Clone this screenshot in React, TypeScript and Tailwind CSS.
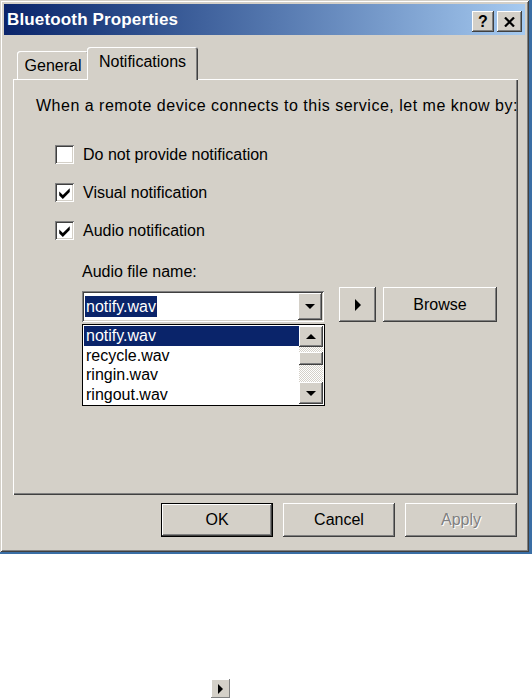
const raised =
  "bg-[#d4d0c8] shadow-[inset_-1px_-1px_#404040,inset_1px_1px_#ffffff,inset_-2px_-2px_#808080,inset_2px_2px_#d4d0c8]";
const sunken =
  "shadow-[inset_1px_1px_#808080,inset_-1px_-1px_#ffffff,inset_2px_2px_#404040,inset_-2px_-2px_#d4d0c8]";

function Check() {
  return (
    <svg width="11" height="12" viewBox="0 0 7 8">
      <path d="M0 3 L2.4 5.4 L7 0.8 L7 3.4 L2.4 8 L0 5.6 Z" fill="#000" />
    </svg>
  );
}

function Checkbox({ checked, label }: { checked?: boolean; label: string }) {
  return (
    <div className="flex items-center gap-[9px] h-[19px]">
      <div className={`w-[19px] h-[19px] bg-white flex items-center justify-center ${sunken}`}>
        {checked && <Check />}
      </div>
      <span className="leading-[20px]">{label}</span>
    </div>
  );
}

function Arrow({ dir }: { dir: "up" | "down" | "right" }) {
  if (dir === "right")
    return (
      <svg width="6" height="12" viewBox="0 0 6 12">
        <path d="M0 0 L6 6 L0 12 Z" fill="#000" />
      </svg>
    );
  return (
    <svg width="10" height="5" viewBox="0 0 10 5">
      <path d={dir === "down" ? "M0 0 H10 L5 5 Z" : "M0 5 H10 L5 0 Z"} fill="#000" />
    </svg>
  );
}

const files = ["notify.wav", "recycle.wav", "ringin.wav", "ringout.wav"];

export default function App() {
  return (
    <div className="w-[532px] min-h-[699px] bg-white font-['Liberation_Sans',Arial,sans-serif] text-[16px] text-black">
      <div className="h-[554px] bg-[#3a6ea5]">
        <div className="w-[529px] h-[552px] p-[4px] bg-[#d4d0c8] shadow-[inset_1px_1px_#d4d0c8,inset_-1px_-1px_#404040,inset_2px_2px_#ffffff,inset_-2px_-2px_#808080]">
          {/* title bar */}
          <div className="h-[31px] flex items-center justify-between pl-[3px] pr-[3px] bg-gradient-to-r from-[#0a246a] to-[#a6caf0]">
            <span className="text-white font-bold text-[17px] leading-[20px] tracking-[0.15px]">Bluetooth Properties</span>
            <div className="flex gap-[3px] mt-[4px]">
              <div className={`w-[22px] h-[21px] flex items-center justify-center font-bold text-[16px] leading-none ${raised}`}>
                ?
              </div>
              <div className={`w-[25px] h-[21px] flex items-center justify-center ${raised}`}>
                <svg width="11" height="10" viewBox="0 0 11 10">
                  <path d="M1 0.5 L10 9.5 M10 0.5 L1 9.5" stroke="#000" strokeWidth="2.2" />
                </svg>
              </div>
            </div>
          </div>

          {/* tabs + page */}
          <div className="ml-[9px] mt-[12px] w-[505px]">
            <div className="flex items-end h-[32px] pl-[4px]">
              <div className="w-[72px] h-[28px] pt-[2px] flex items-center justify-center rounded-t-[3px] shadow-[inset_1px_1px_#ffffff,inset_-1px_0_#404040,inset_-2px_0_#808080]">
                General
              </div>
              <div className="relative z-10 -ml-[2px] -mb-px w-[111px] h-[33px] pb-[3px] flex items-center justify-center rounded-t-[3px] bg-[#d4d0c8] shadow-[inset_1px_1px_#ffffff,inset_-1px_0_#404040,inset_-2px_0_#808080]">
                Notifications
              </div>
            </div>
            <div className="h-[416px] pl-[23px] pt-[17px] shadow-[inset_1px_1px_#ffffff,inset_-1px_-1px_#404040,inset_-2px_-2px_#808080]">
              <p className="leading-[20px] tracking-[0.5px]">
                When a remote device connects to this service, let me know by:
              </p>
              <div className="mt-[29px] ml-[19px] flex flex-col gap-[19px]">
                <Checkbox label="Do not provide notification" />
                <Checkbox checked label="Visual notification" />
                <Checkbox checked label="Audio notification" />
              </div>
              <p className="mt-[22px] ml-[46px] leading-[20px]">Audio file name:</p>
              <div className="mt-[5px] ml-[46px] flex items-end">
                <div className={`relative w-[242px] h-[31px] bg-white flex items-center justify-between pl-[3px] ${sunken}`}>
                  <span className="bg-[#0a246a] text-white leading-[21px] px-px">notify.wav</span>
                  <div className={`w-[24px] h-[27px] mr-[2px] flex items-center justify-center ${raised}`}>
                    <Arrow dir="down" />
                  </div>
                  {/* dropped list */}
                  <div className="absolute left-0 top-[33px] w-[243px] h-[82px] bg-white border border-black flex p-px">
                    <div className="flex-1 flex flex-col">
                      {files.map((f, i) => (
                        <div
                          key={f}
                          className={`h-[19.5px] leading-[19.5px] pl-[2px] ${i === 0 ? "bg-[#0a246a] text-white" : ""}`}
                        >
                          {f}
                        </div>
                      ))}
                    </div>
                    <div className="w-[24px] flex flex-col">
                      <div className={`h-[21px] flex items-center justify-center ${raised}`}>
                        <Arrow dir="up" />
                      </div>
                      <div className="h-[5px] bg-[repeating-conic-gradient(#ffffff_0_25%,#d4d0c8_0_50%)] bg-[length:2px_2px]" />
                      <div className={`h-[13px] ${raised}`} />
                      <div className="flex-1 bg-[repeating-conic-gradient(#ffffff_0_25%,#d4d0c8_0_50%)] bg-[length:2px_2px]" />
                      <div className={`h-[22px] flex items-center justify-center ${raised}`}>
                        <Arrow dir="down" />
                      </div>
                    </div>
                  </div>
                </div>
                <div className={`ml-[15px] w-[37px] h-[35px] flex items-center justify-center ${raised}`}>
                  <Arrow dir="right" />
                </div>
                <div className={`ml-[7px] w-[114px] h-[35px] flex items-center justify-center ${raised}`}>
                  Browse
                </div>
              </div>
            </div>
          </div>

          {/* dialog buttons */}
          <div className="mt-[8px] pr-[8px] flex justify-end gap-[10px]">
            <div className="w-[112px] h-[34px] border border-black">
              <div className={`w-full h-full flex items-center justify-center ${raised}`}>OK</div>
            </div>
            <div className={`w-[112px] h-[34px] flex items-center justify-center ${raised}`}>Cancel</div>
            <div
              className={`w-[112px] h-[34px] flex items-center justify-center text-[#808080] [text-shadow:1px_1px_#ffffff] ${raised}`}
            >
              Apply
            </div>
          </div>
        </div>
      </div>

      <div className="mt-[125px] ml-[211px] w-[19px] h-[19px] flex items-center justify-center bg-[#d4d0c8] shadow-[inset_-1px_-1px_#808080,inset_1px_1px_#ffffff]">
        <svg width="5" height="10" viewBox="0 0 5 10">
          <path d="M0 0 L5 5 L0 10 Z" fill="#000" />
        </svg>
      </div>
    </div>
  );
}
